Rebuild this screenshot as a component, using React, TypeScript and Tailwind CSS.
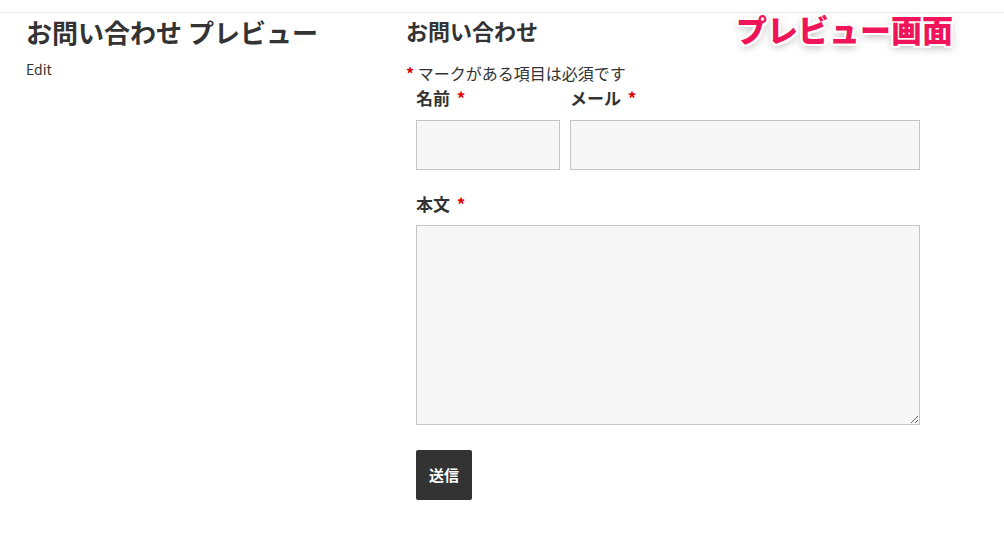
export default function App() {
  const font = { fontFamily: '"Noto Sans CJK JP", "Noto Sans", sans-serif' };
  return (
    <div className="relative h-[538px] w-[1004px] bg-white text-[#333333]" style={font}>
      <div className="h-[13px] border-b border-[#ececec]" />
      <div className="flex">
        {/* left column */}
        <div className="w-[406px] pl-[26px] pt-[2px]">
          <h1 className="text-[26px] font-bold leading-[34px]">お問い合わせ プレビュー</h1>
          <a className="mt-[10px] block text-[14px] leading-[20px]">Edit</a>
        </div>

        {/* right column: form */}
        <div className="flex-1 pt-[2px]">
          <h2 className="text-[22px] font-bold leading-[30px]">お問い合わせ</h2>
          <p className="mt-[18px] text-[16px] leading-[20px]">
            <span className="font-bold text-[#e00000]">*</span> マークがある項目は必須です
          </p>
          <div className="ml-[10px] w-[504px]">
            <div className="mt-[2px] flex gap-[10px]">
              <div className="w-[144px]">
                <label className="block text-[17px] font-bold leading-[26px]">
                  名前 <span className="ml-[3px] text-[#e00000]">*</span>
                </label>
                <input className="mt-[9px] block h-[50px] w-full border border-[#c4c4c4] bg-[#f7f7f7]" />
              </div>
              <div className="flex-1">
                <label className="block text-[17px] font-bold leading-[26px]">
                  メール <span className="ml-[3px] text-[#e00000]">*</span>
                </label>
                <input className="mt-[9px] block h-[50px] w-full border border-[#c4c4c4] bg-[#f7f7f7]" />
              </div>
            </div>
            <label className="mt-[21px] block text-[17px] font-bold leading-[26px]">
              本文 <span className="ml-[3px] text-[#e00000]">*</span>
            </label>
            <textarea className="mt-[8px] block h-[200px] w-full border border-[#c4c4c4] bg-[#f7f7f7]" />
            <button className="mt-[25px] flex h-[50px] w-[56px] items-center justify-center rounded-[2px] bg-[#333333] text-[15px] font-bold text-white">
              送信
            </button>
          </div>
        </div>
      </div>

      {/* annotation overlay */}
      <div
        className="absolute left-[736px] top-[10px] text-[31px] font-black leading-[38px] text-[#f0145a]"
        style={{
          textShadow:
            "2px 0 0 #fff, -2px 0 0 #fff, 0 2px 0 #fff, 0 -2px 0 #fff, 2px 2px 0 #fff, -2px -2px 0 #fff, 2px -2px 0 #fff, -2px 2px 0 #fff, 0 3px 8px rgba(0,0,0,0.35)",
        }}
      >
        プレビュー画面
      </div>
    </div>
  );
}
